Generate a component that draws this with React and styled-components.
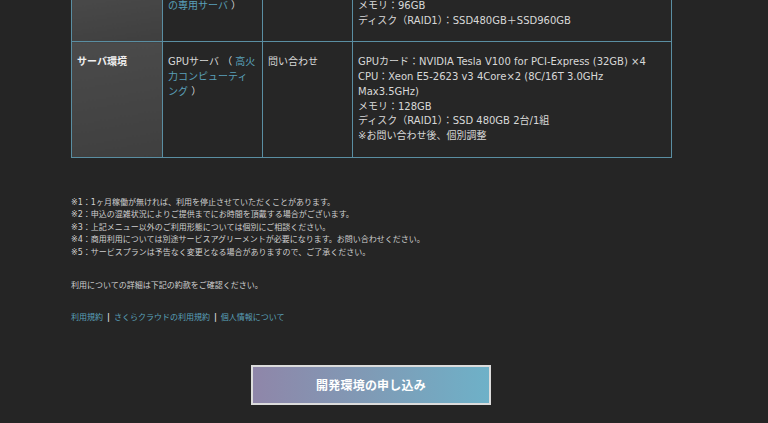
import React from 'react';
import styled, { createGlobalStyle } from 'styled-components';

const GlobalStyle = createGlobalStyle`
  html, body {
    margin: 0;
    padding: 0;
    background: #252525;
  }
  body {
    font-family: "DejaVu Sans", "Noto Sans CJK JP", sans-serif;
    color: #d6d6d6;
    overflow: hidden;
  }
`;

const Page = styled.main`
  width: 768px;
  height: 423px;
  overflow: hidden;
`;

const Inner = styled.div`
  width: 600px;
  margin-left: 71px;
  margin-top: -15px;
`;

// プラン表
const PlanTable = styled.table`
  width: 601px;
  border-collapse: collapse;
  table-layout: fixed;
  font-size: 10px;
  line-height: 14.7px;
  color: #d8d8d8;
`;

const Head = styled.th`
  border: 1px solid #5a8ea2;
  padding: 13px 5px;
  text-align: left;
  vertical-align: top;
  font-weight: bold;
  color: #f0f0f0;
  background: linear-gradient(170deg, #4b4b4b 0%, #3f3f3f 100%);
`;

const Cell = styled.td`
  border: 1px solid #5a8ea2;
  padding: 13px ${(p) => p.$right || 5}px 13px 5px;
  vertical-align: top;
  background: #262626;
`;

const Line = styled.div`
  white-space: nowrap;
`;

const InlineLink = styled.a`
  color: #5aa0b9;
  text-decoration: none;
`;

const Notes = styled.ul`
  list-style: none;
  margin: 39px 0 0;
  padding: 0;
  font-size: 8px;
  line-height: 12.6px;
  color: #cfcfcf;
`;

const Text = styled.p`
  margin: ${(p) => p.$top || 0}px 0 0;
  font-size: 8px;
  line-height: 12.6px;
  color: #cfcfcf;
`;

const LinkRow = styled.p`
  margin: 20px 0 0;
  font-size: 8px;
  line-height: 12.6px;
  color: #d0d0d0;
`;

const FooterLink = styled.a`
  color: #5aa0b9;
  text-decoration: none;
`;

const Sep = styled.span`
  margin: 0 4px;
  font-weight: bold;
  color: #d8d8d8;
`;

const ApplyButton = styled.a`
  display: flex;
  align-items: center;
  justify-content: center;
  box-sizing: border-box;
  width: 240px;
  height: 40px;
  margin: 40px auto 0;
  border: 2px solid #dcdcdc;
  background: linear-gradient(90deg, #8f86a9 0%, #7f9bb6 50%, #6eb1c8 100%);
  color: #ffffff;
  font-size: 12px;
  font-weight: bold;
  text-decoration: none;
  letter-spacing: 0.2px;
`;

const notes = [
  '※1：1ヶ月稼働が無ければ、利用を停止させていただくことがあります。',
  '※2：申込の混雑状況によりご提供までにお時間を頂戴する場合がございます。',
  '※3：上記メニュー以外のご利用形態については個別にご相談ください。',
  '※4：商用利用については別途サービスアグリーメントが必要になります。お問い合わせください。',
  '※5：サービスプランは予告なく変更となる場合がありますので、ご了承ください。',
];

export default function App() {
  return (
    <Page>
      <GlobalStyle />
      <Inner>
        <PlanTable>
          <colgroup>
            <col style={{ width: 91 }} />
            <col style={{ width: 100 }} />
            <col style={{ width: 90 }} />
            <col />
          </colgroup>
          <tbody>
            <tr>
              <Head />
              <Cell $right={6}>
                <InlineLink href="#">の専用サーバ</InlineLink> ）
              </Cell>
              <Cell />
              <Cell>
                <Line>メモリ：96GB</Line>
                <Line>ディスク（RAID1）：SSD480GB＋SSD960GB</Line>
              </Cell>
            </tr>
            <tr>
              <Head>サーバ環境</Head>
              <Cell $right={6}>
                GPUサーバ （ <InlineLink href="#">高火力コンピューティング</InlineLink> ）
              </Cell>
              <Cell>問い合わせ</Cell>
              <Cell>
                <Line>GPUカード：NVIDIA Tesla V100 for PCI-Express (32GB) ×4</Line>
                <Line>CPU：Xeon E5-2623 v3 4Core×2 (8C/16T 3.0GHz</Line>
                <Line>Max3.5GHz)</Line>
                <Line>メモリ：128GB</Line>
                <Line>ディスク（RAID1）：SSD 480GB 2台/1組</Line>
                <Line>※お問い合わせ後、個別調整</Line>
              </Cell>
            </tr>
          </tbody>
        </PlanTable>

        <Notes>
          {notes.map((n) => (
            <li key={n}>{n}</li>
          ))}
        </Notes>

        <Text $top={20}>利用についての詳細は下記の約款をご確認ください。</Text>

        <LinkRow>
          <FooterLink href="#">利用規約</FooterLink>
          <Sep>|</Sep>
          <FooterLink href="#">さくらクラウドの利用規約</FooterLink>
          <Sep>|</Sep>
          <FooterLink href="#">個人情報について</FooterLink>
        </LinkRow>

        <ApplyButton href="#">開発環境の申し込み</ApplyButton>
      </Inner>
    </Page>
  );
}
